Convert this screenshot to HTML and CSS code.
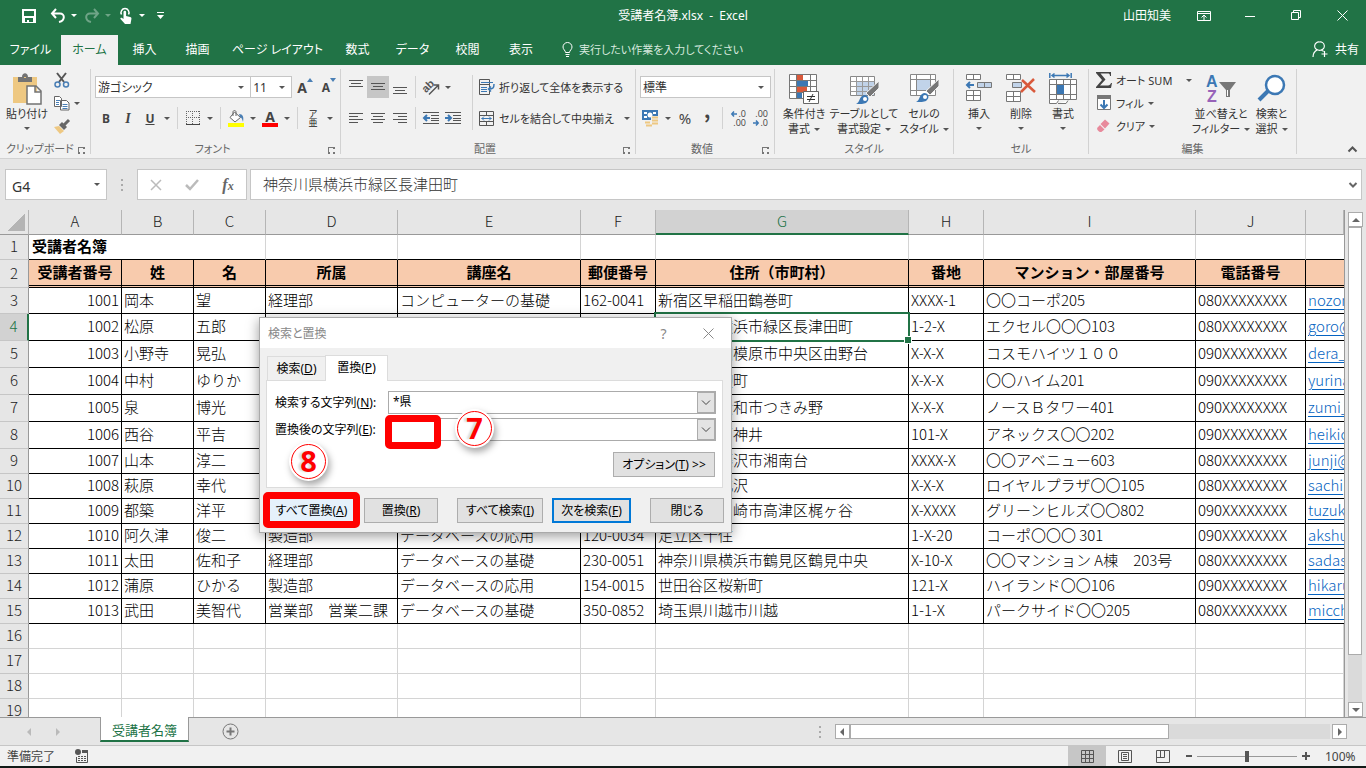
FILE: index.html
```html
<!DOCTYPE html>
<html lang="ja">
<head>
  <meta charset="UTF-8">
  <title>受講者名簿.xlsx - Excel</title>
  <link rel="stylesheet" href="styles.css">
</head>
<body>

  <header class="titlebar">
    <div class="quick">
      <button class="q-btn" aria-label="上書き保存"><svg width="16" height="16" viewBox="0 0 16 16"><path fill="#fff" fill-rule="evenodd" d="M1 1h14v14H1zM3 3v5h10V3zM4 10v4h2v-2h2v2h4v-4z"/></svg></button>
      <button class="q-btn" aria-label="元に戻す"><svg width="16" height="16" viewBox="0 0 16 16"><path fill="none" stroke="#fff" stroke-width="2" d="M6 1L2 5.500l4 4.500M2.500 5.500H10c5 0 5.500 7-1 8.500"/></svg></button>
      <span class="caret"></span>
      <button class="q-btn dim" aria-label="やり直し"><svg width="16" height="16" viewBox="0 0 16 16"><path fill="none" stroke="#fff" stroke-width="2" d="M10 1l4 4.500-4 4.500M13.500 5.500H6c-5 0-5.500 7 1 8.500"/></svg></button>
      <span class="caret dim"></span>
      <button class="q-btn" aria-label="タッチ/マウス モード"><svg width="14" height="18" viewBox="0 0 14 18"><path fill="none" stroke="#fff" stroke-width="1.500" d="M2.500 7.500a4 4 0 1 1 7 0"/><path fill="#fff" d="M4.500 5a1.300 1.300 0 0 1 2.600 0v4l4 1c1.200.300 1.500 1 1.300 2L11.500 17H6L1.500 12c-.5-1 .8-1.700 1.600-1L4.500 12z"/></svg></button>
      <span class="caret"></span>
      <button class="q-btn" aria-label="クイック アクセス ツール バーのカスタマイズ"><svg width="9" height="8" viewBox="0 0 9 8"><path fill="#fff" d="M1 0h7v1H1zM1 3h7L4.500 7z"/></svg></button>
    </div>
    <div class="title">受講者名簿.xlsx&nbsp; -&nbsp; Excel</div>
    <div class="window-tools">
      <span class="user">山田知美</span>
      <button aria-label="リボンの表示オプション"><svg width="14" height="12" viewBox="0 0 14 12"><path fill="none" stroke="#fff" d="M.5 1.500h13v9H.5zM.5 3.500h13M7 10V5M4.500 7.500L7 5l2.500 2.500"/></svg></button>
      <button aria-label="最小化"><svg width="10" height="10" viewBox="0 0 10 10"><path stroke="#fff" d="M0 5.500h10"/></svg></button>
      <button aria-label="元に戻す(縮小)"><svg width="11" height="11" viewBox="0 0 11 11"><path fill="none" stroke="#fff" d="M.5 2.500h7v7h-7zM2.500 2.500v-2h7v7h-2"/></svg></button>
      <button aria-label="閉じる"><svg width="11" height="11" viewBox="0 0 11 11"><path stroke="#fff" d="M.5.500l10 10M10.500.500l-10 10"/></svg></button>
    </div>
  </header>

  <nav class="tabs">
    <a href="#">ファイル</a>
    <a href="#" class="active">ホーム</a>
    <a href="#">挿入</a>
    <a href="#">描画</a>
    <a href="#">ページ レイアウト</a>
    <a href="#">数式</a>
    <a href="#">データ</a>
    <a href="#">校閲</a>
    <a href="#">表示</a>
    <a href="#" class="tellme"><svg width="11" height="15" viewBox="0 0 11 15"><path fill="none" stroke="#fff" d="M3.500 10.500c0-2-2.500-3-2.500-5.500a4.500 4.500 0 0 1 9 0c0 2.500-2.500 3.500-2.500 5.500zM3.500 12.500h4M4 14.500h3"/></svg>実行したい作業を入力してください</a>
    <a href="#" class="share"><svg width="16" height="17" viewBox="0 0 16 17"><path fill="none" stroke="#fff" stroke-width="1.200" d="M7.500 1a4 4 0 0 1 1.500 8c-.5.300-2 .300-3 0a4 4 0 0 1 1.500-8zM1 16c0-4 2-6 4.500-7.200M9.500 9c1 .500 1.500.800 2 1.500M12.500 10v6M9.500 13h6"/></svg>共有</a>
  </nav>

  <section class="ribbon">
    <div class="group g-clip">
      <div class="body">
        <button class="big"><svg width="30" height="32" viewBox="0 0 30 32"><path fill="#eec882" d="M1 4h24v26H1z"/><path fill="#737373" fill-rule="evenodd" d="M6 4h4c0-5 6-5 6 0h4v5H6zm6 0v1h2V4z"/><path fill="#fff" stroke="#737373" stroke-width="1.500" d="M15 13h9l5 5v13H15zM23 13v6h6"/></svg><span>貼り付け</span><span class="caret"></span></button>
        <div class="stack">
          <button aria-label="切り取り"><svg width="16" height="16" viewBox="0 0 16 16"><path stroke="#555" stroke-width="2" d="M3 1l7 9M12 1L5 10"/><circle cx="3.500" cy="12.500" r="2.500" fill="none" stroke="#4a7fb5" stroke-width="1.500"/><circle cx="12" cy="12.500" r="2.500" fill="none" stroke="#4a7fb5" stroke-width="1.500"/></svg></button>
          <button aria-label="コピー"><svg width="16" height="15" viewBox="0 0 16 15"><path fill="#fff" stroke="#666" d="M.5.500h5l2 2v8h-7zM6.500 4.500h6l2.500 2.500v7H6.500z"/><path stroke="#4a7fb5" d="M2 4.500h4M2 6.500h3M2 8.500h3M8.500 8.500h5M8.500 10.500h5M8.500 12.500h5"/></svg><span class="caret"></span></button>
          <button aria-label="書式のコピー/貼り付け"><svg width="16" height="15" viewBox="0 0 16 15"><path fill="#eec882" d="M0 8l5-1 5 5-4 3z"/><path fill="#666" d="M5 6l3-3 5 5-3 3z"/><path stroke="#666" stroke-width="3" d="M10 6l5-5"/></svg></button>
        </div>
      </div>
      <div class="caption">クリップボード<i class="launch"></i></div>
    </div>

    <div class="group g-font">
      <div class="body rows">
        <div class="row">
          <label class="combo font-name"><select aria-label="フォント"><option>游ゴシック</option></select><span class="caret"></span></label>
          <label class="combo font-size"><select aria-label="フォント サイズ"><option>11</option></select><span class="caret"></span></label>
          <button class="tool grow" aria-label="フォント サイズの拡大"><b>A</b><svg width="6" height="12" viewBox="0 0 6 12"><path fill="#4a7fb5" d="M0 6l3-4 3 4z"/></svg></button>
          <button class="tool shrink" aria-label="フォント サイズの縮小"><b>A</b><svg width="6" height="12" viewBox="0 0 6 12"><path fill="#4a7fb5" d="M0 2h6L3 6z"/></svg></button>
        </div>
        <div class="row">
          <button class="tool letter"><b>B</b></button>
          <button class="tool letter italic"><b>I</b></button>
          <button class="tool letter"><u>U</u></button><span class="caret"></span>
          <span class="sep"></span>
          <button class="tool" aria-label="罫線"><svg width="14" height="14" viewBox="0 0 14 14"><path stroke="#666" stroke-dasharray="1 1" d="M0 .5h14M0 6.500h14M.5 0v13M6.500 0v13M13.500 0v13"/><path stroke="#444" d="M0 13.500h14"/></svg></button><span class="caret"></span>
          <span class="sep"></span>
          <button class="tool" aria-label="塗りつぶしの色"><svg width="16" height="17" viewBox="0 0 16 17"><path fill="#fff" stroke="#666" d="M6.500 2l6 5.500-5.500 4.500L2 7.500zM5 6V2c0-2 3-2 3 0v4"/><path fill="#4a7fb5" d="M11 4c4 0 5 3 4 8-1-3-1-4-3-5z"/><path fill="#ff0" d="M0 13h16v4H0z"/></svg></button><span class="caret"></span>
          <button class="tool fontcolor" aria-label="フォントの色"><b>A</b></button><span class="caret"></span>
          <span class="sep"></span>
          <button class="tool ruby" aria-label="ふりがなの表示/非表示"><span>ア</span><span>亜</span></button><span class="caret"></span>
        </div>
      </div>
      <div class="caption">フォント<i class="launch"></i></div>
    </div>

    <div class="group g-align">
      <div class="body split">
        <div class="rows">
          <div class="row">
            <button class="tool" aria-label="上揃え"><svg width="14" height="16" viewBox="0 0 14 16"><path stroke="#555" d="M0 1.500h14M2 4.500h10M0 7.500h14"/></svg></button>
            <button class="tool pressed" aria-label="上下中央揃え"><svg width="14" height="16" viewBox="0 0 14 16"><path stroke="#555" d="M0 4.500h14M2 7.500h10M0 10.500h14"/></svg></button>
            <button class="tool" aria-label="下揃え"><svg width="14" height="16" viewBox="0 0 14 16"><path stroke="#555" d="M0 8.500h14M2 11.500h10M0 14.500h14"/></svg></button>
            <span class="sep"></span>
            <button class="tool" aria-label="方向"><svg width="18" height="16" viewBox="0 0 18 16"><text x="0" y="11" transform="rotate(-45 6 8)" font-family="Liberation Sans" font-size="11" font-weight="bold" fill="#555">ab</text><path fill="none" stroke="#555" stroke-width="1.500" d="M7 15.500L16 6.500M12 6H16.500V10.500"/></svg></button><span class="caret"></span>
          </div>
          <div class="row">
            <button class="tool" aria-label="左揃え"><svg width="14" height="14" viewBox="0 0 14 14"><path stroke="#555" d="M0 2.500h14M0 5.500h9M0 8.500h14M0 11.500h9"/></svg></button>
            <button class="tool" aria-label="中央揃え"><svg width="14" height="14" viewBox="0 0 14 14"><path stroke="#555" d="M0 2.500h14M2 5.500h10M0 8.500h14M2 11.500h10"/></svg></button>
            <button class="tool" aria-label="右揃え"><svg width="14" height="14" viewBox="0 0 14 14"><path stroke="#555" d="M0 2.500h14M5 5.500h9M0 8.500h14M5 11.500h9"/></svg></button>
            <span class="sep"></span>
            <button class="tool" aria-label="インデントを減らす"><svg width="16" height="14" viewBox="0 0 16 14"><path stroke="#555" d="M0 1.500h16M8 4.500h8M8 7.500h8M8 9.500h8M0 12.500h16"/><path fill="none" stroke="#3c78b4" stroke-width="2" d="M7 7H1M4 4L1 7l3 3"/></svg></button>
            <button class="tool" aria-label="インデントを増やす"><svg width="16" height="14" viewBox="0 0 16 14"><path stroke="#555" d="M0 1.500h16M8 4.500h8M8 7.500h8M8 9.500h8M0 12.500h16"/><path fill="none" stroke="#3c78b4" stroke-width="2" d="M0 7h6M3 4l3 3-3 3"/></svg></button>
          </div>
        </div>
        <span class="sep tall"></span>
        <div class="rows">
          <div class="row">
            <button class="wide"><svg width="16" height="16" viewBox="0 0 16 16"><path fill="none" stroke="#555" d="M.5.500h10v15H.5zM.5 5.500h10"/><path stroke="#3c78b4" d="M2 3.500h12M2 8.500h6M2 10.500h6M2 12.500h6"/><path fill="none" stroke="#3c78b4" stroke-width="1.500" d="M15 5c0 4-1 5-5 5M12 7.500L9.500 10l2.500 2.500"/></svg>折り返して全体を表示する</button>
          </div>
          <div class="row">
            <button class="wide"><svg width="16" height="15" viewBox="0 0 16 15"><path fill="none" stroke="#555" d="M.5.500h14v14H.5zM.5 4.500h14M.5 10.500h14M7.500.500v4M7.500 10.500v4"/><path fill="none" stroke="#3c78b4" d="M2.500 7.500h10M5 5.500l-2 2 2 2M10 5.500l2 2-2 2"/></svg>セルを結合して中央揃え</button><span class="caret push"></span>
          </div>
        </div>
      </div>
      <div class="caption">配置<i class="launch"></i></div>
    </div>

    <div class="group g-number">
      <div class="body rows">
        <div class="row">
          <label class="combo number-format"><select aria-label="表示形式"><option>標準</option></select><span class="caret"></span></label>
        </div>
        <div class="row">
          <button class="tool" aria-label="通貨表示形式"><svg width="18" height="17" viewBox="0 0 18 17"><path fill="#3c78b4" d="M0 0h16v10H0z"/><path fill="#fff" d="M2 2h3v2H2zM11 2h3v2h-3zM2 6h3v2H2z"/><circle cx="8" cy="5" r="2.500" fill="#fff"/><path fill="#f1f1f1" d="M9 6h9v11H9z"/><path stroke="#eec882" stroke-width="2" d="M10 7.500h6M10 10.500h6M10 13.500h6M3 12.500h5M4 15.500h6"/></svg></button><span class="caret"></span>
          <button class="tool percent">%</button>
          <button class="tool comma"><b>’</b></button>
          <span class="sep"></span>
          <button class="tool decimals" aria-label="小数点以下の表示桁数を増やす"><span><svg width="6" height="6" viewBox="0 0 6 6"><path fill="none" stroke="#3c78b4" stroke-width="1.500" d="M6 3H1M3 .5L.800 3 3 5.500"/></svg>.0</span><span>.00</span></button>
          <button class="tool decimals" aria-label="小数点以下の表示桁数を減らす"><span>.00</span><span><svg width="6" height="6" viewBox="0 0 6 6"><path fill="none" stroke="#3c78b4" stroke-width="1.500" d="M0 3h5M3 .5L5.200 3 3 5.500"/></svg>.0</span></button>
        </div>
      </div>
      <div class="caption">数値<i class="launch"></i></div>
    </div>

    <div class="group g-style">
      <div class="body">
        <button class="big"><svg width="32" height="32" viewBox="0 0 32 32"><path fill="#fff" stroke="#777" d="M1.500 1.500h27v24h-27zM1.500 7.500h27M1.500 13.500h27M1.500 19.500h27M8.500 1.500v24M22.500 1.500v24"/><path fill="#d9593b" d="M9 2h6v5H9zM9 14h10v5H9z"/><path fill="#3c78b4" d="M9 8h11v5H9zM9 20h5v5H9z"/><path fill="#fff" stroke="#666" d="M15.500 18.500h15v12h-15z"/><path stroke="#333" d="M19 23.500h8M19 26.500h8M25 21l-4 8"/></svg><span>条件付き</span><span>書式<span class="caret"></span></span></button>
        <button class="big center"><svg width="32" height="32" viewBox="0 0 32 32"><path fill="#fff" stroke="#888" d="M2.500 3.500h24v19h-24z"/><path fill="#c1d3e9" d="M9 9h17v13H9z"/><path stroke="#999" d="M2.500 8.500h24M2.500 13.500h24M2.500 18.500h24M8.500 3.500v19M14.500 3.500v19M20.500 3.500v19"/><path fill="#777" stroke="#f1f1f1" d="M31 8v7l-9 9-4-4z"/><path fill="#3c78b4" d="M8 31c4-1 3-8 8-9 5 0 6 5 2 8-2 1-6 1-10 1z"/><circle cx="17" cy="26" r="2" fill="#fff"/></svg><span>テーブルとして</span><span>書式設定<span class="caret"></span></span></button>
        <button class="big"><svg width="32" height="32" viewBox="0 0 32 32"><path fill="#fff" stroke="#888" d="M2.500 1.500h25v21h-25zM2.500 6.500h25M2.500 17.500h25M8.500 1.500v21M22.500 1.500v21"/><path fill="#c1d3e9" d="M9 7h13v10H9z"/><path fill="#777" stroke="#f1f1f1" d="M31 6v7l-9 9-4-4z"/><path fill="#3c78b4" d="M8 29c4-1 3-8 8-9 5 0 6 5 2 8-2 1-6 1-10 1z"/><circle cx="17" cy="24" r="2" fill="#fff"/></svg><span>セルの</span><span>スタイル<span class="caret"></span></span></button>
      </div>
      <div class="caption">スタイル</div>
    </div>

    <div class="group g-cells">
      <div class="body">
        <button class="big"><svg width="28" height="32" viewBox="0 0 28 32"><path fill="#fff" stroke="#777" d="M1.500 1.500h14v5h-14zM8.500 1.500v5M1.500 17.500h14v10h-14zM1.500 22.500h14M8.500 17.500v10"/><path fill="#c1d3e9" stroke="#777" d="M12.500 9.500h14v5h-14zM19.500 9.500v5"/><path fill="none" stroke="#3c78b4" stroke-width="2" d="M9 12H2M5 9l-3 3 3 3"/></svg><span>挿入</span><span class="caret"></span></button>
        <button class="big"><svg width="30" height="32" viewBox="0 0 30 32"><path fill="#fff" stroke="#777" d="M.5 1.500h14v5H.5zM7.500 1.500v5M.5 18.500h14v10H.5zM.5 23.500h14M7.500 18.500v10"/><path fill="#c1d3e9" stroke="#777" d="M6.500 9.500h9v5h-9z"/><path stroke="#d9593b" stroke-width="2.500" d="M16 7l13 12M28 6L15 19"/></svg><span>削除</span><span class="caret"></span></button>
        <button class="big"><svg width="28" height="32" viewBox="0 0 28 32"><path fill="#fff" stroke="#777" d="M.5 6.500h27v20H.5zM.5 11.500h27M.5 21.500h27M7.500 6.500v20M14.500 6.500v20M21.500 6.500v20M.5 26.500v4h7l2-3M9 30.500h8l2-3"/><path fill="#3c78b4" d="M8 12h7v9H8z"/><path fill="none" stroke="#3c78b4" stroke-width="1.500" d="M.8 0v5M22.200 0v5M3 2.500h17M5.500.500l-2.500 2 2.500 2M17.500.500l2.500 2-2.500 2"/></svg><span>書式</span><span class="caret"></span></button>
      </div>
      <div class="caption">セル</div>
    </div>

    <div class="group g-edit">
      <div class="body">
        <div class="stack">
          <button><svg width="16" height="16" viewBox="0 0 16 16"><path fill="#444" d="M0 0h15v4h-1c0-2-1-2.500-2-2.500H4.500L9.500 7.500l-5.500 6h8c1.500 0 2.500-1 3-2.500h1l-1 5H0v-1l6-7L0 1z"/></svg>オート SUM<span class="caret push"></span></button>
          <button><svg width="16" height="16" viewBox="0 0 16 16"><path fill="#fff" stroke="#777" d="M1.500 1.500h13v13h-13z"/><path fill="#777" d="M1 0h14v4H1z"/><path fill="none" stroke="#3c78b4" stroke-width="2" d="M8 5v8M4.500 9.500L8 13l3.500-3.500"/></svg>フィル<span class="caret"></span></button>
          <button><svg width="16" height="16" viewBox="0 0 16 16"><path fill="#e8899b" d="M9 1.500l4.500 4-4.500 5-4.500-4.500zM4 7l4.500 4.500-2.500 2c-1 1-2 .500-3 0L1.500 12c-.5-1-.5-2 0-2.500z"/></svg>クリア<span class="caret"></span></button>
        </div>
        <button class="big"><svg width="32" height="32" viewBox="0 0 32 32"><text x="1" y="14" font-family="Liberation Sans" font-size="16" font-weight="bold" fill="#3c78b4">A</text><text x="2" y="29" font-family="Liberation Sans" font-size="16" font-weight="bold" fill="#9762b8">Z</text><path fill="#777" d="M14 9h17l-6 8v7h-4v-7z"/><path fill="#fff" d="M22 17h1v6h-1z"/></svg><span>並べ替えと</span><span>フィルター<span class="caret"></span></span></button>
        <button class="big find"><svg width="32" height="32" viewBox="0 0 32 32"><circle cx="19" cy="12" r="9" fill="#fff" stroke="#3c78b4" stroke-width="2.500"/><path stroke="#3c78b4" stroke-width="4" d="M12 18L3 27"/></svg><span>検索と</span><span>選択<span class="caret"></span></span></button>
      </div>
      <div class="caption">編集</div>
    </div>
    <button class="collapse" aria-label="リボンを折りたたむ"><svg width="9" height="7" viewBox="0 0 9 7"><path fill="none" stroke="#555" stroke-width="2" d="M.5 5.500l4-4 4 4"/></svg></button>
  </section>

  <section class="formula">
    <label class="namebox"><input type="text" value="G4" aria-label="名前ボックス"><span class="caret"></span></label>
    <span class="dots"></span>
    <div class="fx">
      <button aria-label="キャンセル"><svg width="12" height="12" viewBox="0 0 12 12"><path stroke="#bbb" stroke-width="1.500" d="M1 1l10 10M11 1L1 11"/></svg></button>
      <button aria-label="入力"><svg width="14" height="12" viewBox="0 0 14 12"><path fill="none" stroke="#bbb" stroke-width="2.500" d="M1 6l4 4 8-9"/></svg></button>
      <button class="fn" aria-label="関数の挿入"><i>f</i><i class="x">x</i></button>
    </div>
    <label class="fbar"><input type="text" value="神奈川県横浜市緑区長津田町" aria-label="数式バー"><svg width="8" height="6" viewBox="0 0 8 6"><path fill="none" stroke="#666" stroke-width="2" d="M.5 1L4 4.500 7.500 1"/></svg></label>
  </section>

  <main class="work">
    <div class="sheet">
      <table class="grid">
        <colgroup>
          <col class="c-no"><col class="c-a"><col class="c-b"><col class="c-c"><col class="c-d"><col class="c-e"><col class="c-f"><col class="c-g"><col class="c-h"><col class="c-i"><col class="c-j"><col class="c-k">
        </colgroup>
        <thead>
          <tr><th class="corner"></th><th>A</th><th>B</th><th>C</th><th>D</th><th>E</th><th>F</th><th class="on">G</th><th>H</th><th>I</th><th>J</th><th></th></tr>
        </thead>
        <tbody class="list">
          <tr class="name"><th>1</th><td colspan="3">受講者名簿</td><td></td><td></td><td></td><td></td><td></td><td></td><td></td><td></td></tr>
          <tr class="fields"><th>2</th><td>受講者番号</td><td>姓</td><td>名</td><td>所属</td><td>講座名</td><td>郵便番号</td><td>住所（市町村）</td><td>番地</td><td>マンション・部屋番号</td><td>電話番号</td><td></td></tr>
          <tr class="first"><th>3</th><td>1001</td><td>岡本</td><td>望</td><td>経理部</td><td>コンピューターの基礎</td><td>162-0041</td><td>新宿区早稲田鶴巻町</td><td>XXXX-1</td><td>〇〇コーポ205</td><td>080XXXXXXXX</td><td><a href="#">nozomi</a></td></tr>
          <tr class="tall on"><th>4</th><td>1002</td><td>松原</td><td>五郎</td><td></td><td></td><td></td><td class="selected">神奈川県横浜市緑区長津田町<span class="handle"></span></td><td>1-2-X</td><td>エクセル〇〇〇103</td><td>080XXXXXXXX</td><td><a href="#">goro@</a></td></tr>
          <tr class="tall"><th>5</th><td>1003</td><td>小野寺</td><td>晃弘</td><td></td><td></td><td></td><td>神奈川県相模原市中央区由野台</td><td>X-X-X</td><td>コスモハイツ１００</td><td>090XXXXXXXX</td><td><a href="#">dera_</a></td></tr>
          <tr class="tall"><th>6</th><td>1004</td><td>中村</td><td>ゆりか</td><td></td><td></td><td></td><td>千代田区麹町</td><td>X-X-X</td><td>〇〇ハイム201</td><td>090XXXXXXXX</td><td><a href="#">yurina</a></td></tr>
          <tr class="tall"><th>7</th><td>1005</td><td>泉</td><td>博光</td><td></td><td></td><td></td><td>神奈川県大和市つきみ野</td><td>X-X-X</td><td>ノースＢタワー401</td><td>090XXXXXXXX</td><td><a href="#">zumi_</a></td></tr>
          <tr class="tall"><th>8</th><td>1006</td><td>西谷</td><td>平吉</td><td></td><td></td><td></td><td>練馬区上石神井</td><td>101-X</td><td>アネックス〇〇202</td><td>090XXXXXXXX</td><td><a href="#">heikic</a></td></tr>
          <tr><th>9</th><td>1007</td><td>山本</td><td>淳二</td><td></td><td></td><td></td><td>神奈川県藤沢市湘南台</td><td>XXXX-X</td><td>〇〇アベニュー603</td><td>080XXXXXXXX</td><td><a href="#">junji@</a></td></tr>
          <tr><th>10</th><td>1008</td><td>萩原</td><td>幸代</td><td></td><td></td><td></td><td>世田谷区北沢</td><td>X-X-X</td><td>ロイヤルプラザ〇〇105</td><td>080XXXXXXXX</td><td><a href="#">sachi</a></td></tr>
          <tr><th>11</th><td>1009</td><td>都築</td><td>洋平</td><td></td><td></td><td></td><td>神奈川県川崎市高津区梶ヶ谷</td><td>X-XXXX</td><td>グリーンヒルズ〇〇802</td><td>090XXXXXXXX</td><td><a href="#">tuzuki</a></td></tr>
          <tr><th>12</th><td>1010</td><td>阿久津</td><td>俊二</td><td>製造部</td><td>データベースの応用</td><td>120-0034</td><td>足立区千住</td><td>1-X-20</td><td>コーポ〇〇〇 301</td><td>090XXXXXXXX</td><td><a href="#">akshu</a></td></tr>
          <tr><th>13</th><td>1011</td><td>太田</td><td>佐和子</td><td>経理部</td><td>データベースの基礎</td><td>230-0051</td><td>神奈川県横浜市鶴見区鶴見中央</td><td>X-10-X</td><td>〇〇マンション A棟　203号</td><td>080XXXXXXXX</td><td><a href="#">sadas</a></td></tr>
          <tr><th>14</th><td>1012</td><td>蒲原</td><td>ひかる</td><td>製造部</td><td>データベースの応用</td><td>154-0015</td><td>世田谷区桜新町</td><td>121-X</td><td>ハイランド〇〇106</td><td>090XXXXXXXX</td><td><a href="#">hikaru</a></td></tr>
          <tr><th>15</th><td>1013</td><td>武田</td><td>美智代</td><td>営業部　営業二課</td><td>データベースの基礎</td><td>350-0852</td><td>埼玉県川越市川越</td><td>1-1-X</td><td>パークサイド〇〇205</td><td>080XXXXXXXX</td><td><a href="#">micch</a></td></tr>
        </tbody>
        <tbody class="blank">
          <tr><th>16</th><td></td><td></td><td></td><td></td><td></td><td></td><td></td><td></td><td></td><td></td><td></td></tr>
          <tr><th>17</th><td></td><td></td><td></td><td></td><td></td><td></td><td></td><td></td><td></td><td></td><td></td></tr>
          <tr><th>18</th><td></td><td></td><td></td><td></td><td></td><td></td><td></td><td></td><td></td><td></td><td></td></tr>
          <tr><th>19</th><td></td><td></td><td></td><td></td><td></td><td></td><td></td><td></td><td></td><td></td><td></td></tr>
        </tbody>
      </table>
    </div>
    <div class="vscroll">
      <button class="arrow" aria-label="上へ"><span class="tri up"></span></button>
      <div class="track"><div class="thumb"></div></div>
      <button class="arrow" aria-label="下へ"><span class="tri down"></span></button>
    </div>
  </main>

  <footer class="sheetbar">
    <span class="tri left"></span>
    <span class="tri right"></span>
    <a href="#" class="sheet-tab">受講者名簿</a>
    <button class="add" aria-label="新しいシート"><svg width="17" height="17" viewBox="0 0 17 17"><circle cx="8.500" cy="8.500" r="7.500" fill="none" stroke="#777"/><path stroke="#777" stroke-width="2" d="M8.500 4.500v8M4.500 8.500h8"/></svg></button>
    <span class="dots"></span>
    <div class="hscroll">
      <button class="arrow" aria-label="左へ"><span class="tri left"></span></button>
      <div class="track"><div class="thumb"></div></div>
      <button class="arrow" aria-label="右へ"><span class="tri right"></span></button>
    </div>
  </footer>

  <footer class="status">
    <span class="ready">準備完了</span>
    <svg class="macro" width="14" height="14" viewBox="0 0 14 14"><circle cx="3" cy="3" r="3" fill="#555"/><path fill="none" stroke="#555" d="M1.500 8v5.500h11v-12H7"/><path fill="#555" d="M7 1h6v3H7z"/><path stroke="#555" stroke-dasharray="2 1" d="M3 7.500h9M3 9.500h9M3 11.500h9"/></svg>
    <div class="views">
      <button class="view pressed" aria-label="標準"><svg width="13" height="13" viewBox="0 0 13 13"><path fill="none" stroke="#555" d="M.5.500h12v12H.5zM.5 4.500h12M.5 8.500h12M4.500.500v12M8.500.500v12"/></svg></button>
      <button class="view" aria-label="ページ レイアウト"><svg width="14" height="13" viewBox="0 0 14 13"><path fill="none" stroke="#555" d="M.5.500h13v12H.5zM3.500 2.500h7v8h-7zM5 4.500h4M5 6.500h4M5 8.500h4"/></svg></button>
      <button class="view" aria-label="改ページ プレビュー"><svg width="14" height="13" viewBox="0 0 14 13"><path fill="none" stroke="#555" d="M.5.500h13v12H.5zM.5 7.500h8M4.500.500v7M8.500.500v7"/></svg></button>
    </div>
    <div class="zoom">
      <button class="minus" aria-label="縮小"></button>
      <input type="range" min="0" max="100" value="50" aria-label="ズーム">
      <button class="plus" aria-label="拡大"><svg width="8" height="8" viewBox="0 0 8 8"><path stroke="#555" stroke-width="2" d="M4 0v8M0 4h8"/></svg></button>
      <span class="percent">100%</span>
    </div>
  </footer>

  <div class="dialog" role="dialog" aria-label="検索と置換">
    <div class="dialog-title">
      <span>検索と置換</span>
      <button class="help">?</button>
      <button aria-label="閉じる"><svg width="11" height="11" viewBox="0 0 11 11"><path stroke="#888" d="M.5.500l10 10M10.500.500l-10 10"/></svg></button>
    </div>
    <div class="dialog-tabs">
      <button class="find-tab">検索(<u>D</u>)</button>
      <button class="replace-tab">置換(<u>P</u>)</button>
    </div>
    <div class="panel">
      <div class="field">
        <label for="find">検索する文字列(<u>N</u>):</label>
        <div class="box"><input id="find" type="text" value="*県"><button aria-label="履歴"><svg width="10" height="6" viewBox="0 0 10 6"><path fill="none" stroke="#444" d="M1 .5l4 4 4-4"/></svg></button></div>
      </div>
      <div class="field">
        <label for="replace">置換後の文字列(<u>E</u>):</label>
        <div class="box"><input id="replace" type="text"><button aria-label="履歴"><svg width="10" height="6" viewBox="0 0 10 6"><path fill="none" stroke="#444" d="M1 .5l4 4 4-4"/></svg></button></div>
      </div>
      <button class="push options">オプション(<u>T</u>) &gt;&gt;</button>
    </div>
    <div class="actions">
      <button class="push hot all">すべて置換(<u>A</u>)</button>
      <button class="push replace">置換(<u>R</u>)</button>
      <button class="push find-all">すべて検索(<u>I</u>)</button>
      <button class="push default">次を検索(<u>F</u>)</button>
      <button class="push close">閉じる</button>
    </div>
    <div class="mark mark-field"></div>
    <div class="mark mark-button"></div>
    <div class="step step-seven">7</div>
    <div class="step step-eight">8</div>
  </div>

</body>
</html>
```
FILE: styles.css
```css
* {
  box-sizing: border-box;
}
body {
  margin: 0;
  height: 100vh;
  display: flex;
  flex-direction: column;
  overflow: hidden;
  background: #e6e6e6;
  border-bottom: 2px solid #111a17;
  font-family: "Noto Sans", "Noto Sans CJK JP", sans-serif;
  font-size: 12px;
  line-height: 15px;
  font-feature-settings: "palt";
  color: #333;
}
button, input, select {
  font: inherit;
  font-feature-settings: inherit;
  color: inherit;
  background: none;
  border: none;
  padding: 0;
  margin: 0;
}
button {
  display: flex;
  align-items: center;
  justify-content: center;
  white-space: nowrap;
}
input {
  min-width: 0;
  outline: none;
}
a {
  color: inherit;
  text-decoration: none;
}
svg {
  display: block;
  flex-shrink: 0;
  overflow: visible;
}
.dim {
  opacity: 0.35;
}
.caret {
  display: inline-block;
  flex-shrink: 0;
  width: 5px;
  border: 3px solid transparent;
  border-top-color: #555;
  border-bottom: none;
}

/* title bar */
.titlebar {
  height: 35px;
  flex-shrink: 0;
  display: grid;
  grid-template-columns: 1fr auto 1fr;
  align-items: center;
  background: #217346;
  color: #fff;
  padding-bottom: 4px;
}
.title {
  white-space: pre;
}
.quick {
  display: flex;
  align-items: center;
  padding-left: 21px;
}
.quick .q-btn {
  width: 16px;
}
.quick .q-btn:nth-child(2) {
  margin-left: 13px;
}
.quick .caret {
  border-top-color: #fff;
  margin: 0 7px 0 5px;
}
.window-tools {
  display: flex;
  align-items: center;
  justify-content: flex-end;
  padding-right: 1px;
}
.window-tools button {
  width: 46px;
  height: 30px;
}
.user {
  margin-right: 10px;
}

/* ribbon tabs */
.tabs {
  height: 30px;
  flex-shrink: 0;
  display: grid;
  grid-template-columns: 61px 57px 53px 53px 107px 53px 57px 53px 54px 1fr auto;
  background: #217346;
  color: #fff;
}
.tabs a {
  display: flex;
  align-items: center;
  justify-content: center;
  padding-bottom: 2px;
  white-space: nowrap;
}
.tabs .active {
  background: #f1f1f1;
  color: #217346;
}
.tabs .tellme {
  justify-content: flex-start;
  gap: 6px;
  padding-left: 14px;
  font-size: 11px;
  color: #d7e9de;
}
.tabs .share {
  gap: 7px;
  padding-right: 7px;
}

/* ribbon */
.ribbon {
  display: flex;
  flex-shrink: 0;
  height: 94px;
  padding: 4px 0;
  background: #f1f1f1;
  border-bottom: 1px solid #d2d2d2;
  font-size: 11px;
}
.group {
  display: flex;
  flex-direction: column;
  flex-shrink: 0;
  border-right: 1px solid #d2d2d2;
}
.g-clip { width: 91px; }
.g-font { width: 250px; }
.g-align { width: 295px; }
.g-number { width: 139px; }
.g-style { width: 179px; }
.g-cells { width: 135px; }
.g-edit { width: 208px; }
.body {
  flex: 1;
  display: flex;
}
.caption {
  height: 10px;
  display: flex;
  align-items: center;
  justify-content: center;
  color: #666;
  line-height: 10px;
  white-space: nowrap;
}
.launch {
  width: 7px;
  height: 7px;
  margin: 3px 5px 0 auto;
  border: 1px solid #777;
  border-right: 2px dotted #777;
  border-bottom: 2px dotted #777;
}
.caption:has(.launch)::before {
  content: "";
  width: 6px;
  margin-right: auto;
}
.g-clip .caption::before {
  margin: 0;
}
.rows {
  display: flex;
  flex-direction: column;
  gap: 9px;
}
.body.rows, .split .rows {
  padding: 7px 0 0 4px;
}
.row {
  display: flex;
  align-items: center;
  height: 22px;
}
.tool {
  width: 22px;
  height: 22px;
  flex-shrink: 0;
  color: #444;
}
.tool + .caret {
  margin: 0 3px;
}
.pressed {
  background: #c6c6c6;
}
.sep {
  width: 1px;
  height: 22px;
  background: #d2d2d2;
  margin: 0 4px;
}
.sep.tall {
  flex-shrink: 0;
  height: 55px;
  margin: 6px 2px 0 8px;
}
.combo {
  display: grid;
  grid-template-columns: 1fr 12px;
  align-items: center;
  height: 22px;
  background: #fff;
  border: 1px solid #c6c6c6;
  font-size: 12px;
}
.combo select {
  grid-area: 1 / 1 / 2 / 3;
  appearance: none;
  height: 20px;
  padding-left: 2px;
  outline: none;
}
.combo .caret {
  grid-area: 1 / 2;
}
.font-name { width: 157px; }
.font-size { width: 41px; border-left: none; }
.number-format { width: 131px; }
.letter {
  font-size: 12px;
}
.italic {
  font-family: "Liberation Serif", serif;
  font-style: italic;
  font-size: 14px;
}
.letter u {
  font-weight: bold;
}
.grow, .shrink {
  font-size: 14px;
  margin-left: 2px;
}
.shrink {
  font-size: 12px;
}
.grow svg, .shrink svg {
  align-self: flex-start;
}
.fontcolor {
  flex-direction: column;
  font-size: 14px;
}
.fontcolor b {
  width: 16px;
  height: 17px;
  border-bottom: 4px solid #f00;
  line-height: 14px;
}
.ruby {
  flex-direction: column;
  font-size: 9px;
  line-height: 9px;
  color: #222;
}
.wide {
  gap: 4px;
}
.caret.push {
  margin-left: 10px;
}
.tool.percent {
  font-size: 15px;
}
.comma {
  font-family: "Noto Sans CJK JP", sans-serif;
  font-size: 22px;
  line-height: 30px;
  padding-top: 8px;
}
.decimals {
  flex-direction: column;
  align-items: flex-end;
  padding-right: 3px;
  font: 9px/9px "Open Sans", sans-serif;
}
.decimals span {
  display: flex;
  align-items: center;
  gap: 1px;
}
.big {
  flex-direction: column;
  justify-content: flex-start;
  width: 42px;
  padding-top: 4px;
}
.big svg {
  margin-bottom: 1px;
}
.big .caret {
  margin: 0 0 2px 4px;
}
.big > .caret {
  margin: 6px 0 0;
}
.g-clip .big {
  width: 54px;
}
.g-clip .stack {
  width: 30px;
}
.stack {
  display: flex;
  flex-direction: column;
  gap: 1px;
}
.stack button {
  height: 22px;
  justify-content: flex-start;
  gap: 4px;
}
.g-style .body {
  justify-content: center;
}
.g-style .big {
  width: 52px;
}
.g-style .big.center {
  width: 68px;
}
.g-cells .body {
  padding-left: 4px;
}
.g-edit .body {
  padding-left: 7px;
}
.g-edit .stack {
  width: 96px;
}
.g-edit .big {
  width: 58px;
}
.g-edit .big.find {
  width: 43px;
}
.collapse {
  margin: auto 9px 0 auto;
  padding-bottom: 1px;
}

/* formula bar */
.formula {
  display: flex;
  flex-shrink: 0;
  height: 51px;
  padding: 10px 4px 10px 5px;
}
.namebox, .fx, .fbar {
  display: flex;
  align-items: center;
  background: #fff;
  border: 1px solid #c6c6c6;
}
.namebox {
  width: 102px;
  padding: 4px 6px 0;
  font-size: 14px;
}
.namebox input {
  flex: 1;
}
.namebox .caret {
  margin-bottom: 4px;
}
.dots {
  width: 2px;
  height: 12px;
  margin: auto 14px;
  background: repeating-linear-gradient(#aaa 0 2px, transparent 2px 5px);
}
.fx {
  width: 110px;
  margin-right: 3px;
}
.fx button {
  flex: 1;
}
.fn {
  font-family: "Liberation Serif", serif;
  font-size: 16px;
  font-weight: bold;
  color: #666;
}
.fn .x {
  font-size: 12px;
  padding-top: 4px;
}
.fbar {
  flex: 1;
  padding: 0 4px 0 12px;
  font-family: "Noto Sans CJK JP", sans-serif;
  font-size: 15px;
}
.fbar input {
  flex: 1;
  padding-bottom: 3px;
  font-weight: 300;
  font-feature-settings: normal;
}

/* sheet */
.work {
  flex: 1;
  min-height: 0;
  display: flex;
}
.sheet {
  flex: 1;
  min-width: 0;
  overflow: hidden;
  border-right: 1px solid #999;
}
.grid {
  table-layout: fixed;
  width: 100%;
  min-width: 1344px;
  border-spacing: 0;
  background: #fff;
  font-family: "Noto Sans CJK JP", sans-serif;
  font-size: 15px;
  line-height: 20px;
  font-weight: 300;
  font-feature-settings: normal;
  color: #000;
}
.c-no { width: 29px; }
.c-a { width: 93px; }
.c-b, .c-c { width: 72px; }
.c-d { width: 132px; }
.c-e { width: 183px; }
.c-f { width: 75px; }
.c-g { width: 253px; }
.c-h { width: 75px; }
.c-i { width: 212px; }
.c-j { width: 110px; }
.grid th, .grid td {
  height: 25px;
  padding: 0 2px 2px;
  white-space: nowrap;
  overflow: hidden;
  border-right: 1px solid #d4d4d4;
  border-bottom: 1px solid #d4d4d4;
}
.grid td {
  text-align: left;
}
.grid th {
  background: #e6e6e6;
  font-weight: 300;
  color: #222;
  border-right-color: #999;
  border-bottom-color: #c6c6c6;
}
.grid thead th {
  border-right-color: #b5b5b5;
  border-bottom-color: #999;
}
.grid thead th.on {
  background: #d2d2d2;
  color: #217346;
  border-bottom: 2px solid #217346;
}
.grid .corner {
  background: linear-gradient(135deg, transparent 50%, #b4b4b4 50%) 8px 4px / 17px 17px no-repeat #e6e6e6;
}
.on > th:first-child {
  background: #d2d2d2;
  color: #217346;
  border-right: 2px solid #217346;
}
.list td {
  border-color: #000;
}
.grid .name td {
  font-weight: bold;
  padding-left: 3px;
  border-right-color: #d4d4d4;
}
.grid .fields th, .grid .fields td {
  height: 28px;
}
.grid .fields td {
  background: #f8cbad;
  font-weight: bold;
  text-align: center;
  border-bottom: 3px double #000;
}
.grid .first th, .grid .first td {
  height: 26px;
}
.grid .tall th, .grid .tall td {
  height: 27px;
}
.list tr:not(.fields):not(.name) td:nth-child(2) {
  text-align: right;
}
.grid .list td:last-child {
  border-right: none;
}
.list a {
  color: #0563c1;
  text-decoration: underline;
  text-underline-offset: 3px;
}
.grid .selected {
  position: relative;
  overflow: visible;
}
.selected::after {
  content: "";
  position: absolute;
  inset: -2px -2px -2px -2px;
  border: 2px solid #217346;
}
.handle {
  position: absolute;
  right: -3px;
  bottom: -3px;
  z-index: 1;
  width: 6px;
  height: 6px;
  background: #217346;
  outline: 1px solid #fff;
}

/* scroll bars */
.tri {
  border: 4px solid transparent;
}
.tri.up { border-bottom-color: #666; border-top: none; }
.tri.down { border-top-color: #666; border-bottom: none; }
.tri.left { border-right-color: #666; border-left: none; }
.tri.right { border-left-color: #666; border-right: none; }
.arrow {
  width: 15px;
  height: 15px;
  background: #fff;
  border: 1px solid #ababab;
}
.vscroll {
  width: 21px;
  display: flex;
  flex-direction: column;
  padding: 2px 4px 0 3px;
}
.track {
  flex: 1;
  background: #dadada;
}
.thumb {
  background: #fff;
  border: 1px solid #ababab;
}
.vscroll .thumb {
  height: 90%;
}
.sheetbar {
  display: flex;
  flex-shrink: 0;
  height: 28px;
  border-top: 1px solid #999;
}
.sheetbar > .tri {
  align-self: center;
  margin-left: 27px;
  opacity: 0.35;
}
.sheetbar > .tri + .tri {
  margin: 0 40px 0 25px;
}
.sheet-tab {
  width: 89px;
  height: 25px;
  margin-top: -1px;
  padding-top: 6px;
  text-align: center;
  background: #fff;
  color: #217346;
  font-size: 13px;
  border: 1px solid #999;
  border-top: none;
  border-bottom: 2px solid #217346;
}
.add {
  margin-left: 33px;
}
.sheetbar .dots {
  margin-right: 14px;
  margin-left: auto;
}
.hscroll {
  width: 37.5%;
  display: flex;
  align-items: center;
  margin-right: 19px;
}
.hscroll .track, .hscroll .thumb {
  height: 15px;
}
.hscroll .track {
  margin-right: 2px;
}
.hscroll .thumb {
  width: 66.5%;
}

/* status bar */
.status {
  display: flex;
  align-items: center;
  flex-shrink: 0;
  height: 21px;
  padding-left: 7px;
  background: #f1f1f1;
  border-top: 1px solid #c6c6c6;
  color: #444;
}
.macro {
  margin-left: 20px;
}
.views {
  display: flex;
  align-self: stretch;
  margin-left: auto;
}
.view {
  width: 38px;
}
.zoom {
  display: flex;
  align-items: center;
  gap: 5px;
  padding: 0 8px 0 4px;
}
.zoom .percent {
  width: 33px;
  margin-left: 10px;
}
.minus {
  width: 6px;
  height: 2px;
  background: #555;
}
.zoom input {
  appearance: none;
  width: 100px;
  height: 10px;
  background: linear-gradient(#999, #999) center / 100% 1px no-repeat;
}
.zoom input::-webkit-slider-thumb {
  appearance: none;
  width: 4px;
  height: 11px;
  background: #555;
}

/* find and replace window */
.dialog {
  position: absolute;
  left: 259px;
  top: 317px;
  width: 473px;
  background: #f0f0f0;
  border: 1px solid #aaa;
  box-shadow: 0 3px 12px rgba(0, 0, 0, 0.4);
  color: #000;
}
.dialog-title {
  display: flex;
  align-items: center;
  height: 30px;
  padding-left: 8px;
  background: #fff;
  color: #888;
}
.dialog-title span {
  margin-right: auto;
}
.dialog-title button {
  width: 45px;
}
.dialog-title .help {
  font-size: 14px;
}
.dialog-tabs {
  display: flex;
  align-items: flex-end;
  height: 32px;
  padding-left: 7px;
}
.dialog-tabs button {
  border: 1px solid #dcdcdc;
  border-bottom: none;
}
.dialog-tabs .find-tab {
  width: 58px;
  height: 24px;
  border-right: none;
}
.dialog-tabs .replace-tab {
  width: 63px;
  height: 26px;
  background: #fff;
  padding-bottom: 2px;
}
.panel {
  display: flex;
  flex-direction: column;
  gap: 4px;
  margin: 0 8px 0 6px;
  padding: 10px 6px 10px 8px;
  background: #fff;
  border: 1px solid #dcdcdc;
}
.replace-tab {
  position: relative;
  top: 1px;
}
.field {
  display: grid;
  grid-template-columns: 113px 1fr;
  align-items: center;
}
.field label {
  white-space: nowrap;
}
.box {
  display: flex;
  height: 23px;
  border: 1px solid #ababab;
  background: #fff;
}
.box input {
  flex: 1;
  padding: 0 0 3px 4px;
}
.box button {
  width: 18px;
  background: #e3e3e3;
  border: 1px solid #ababab;
}
.push:is(button) {
  height: 25px;
  background: #e1e1e1;
  border: 1px solid #adadad;
}
.options {
  align-self: flex-end;
  width: 102px;
  margin: 7px 1px 0 0;
}
.actions {
  display: flex;
  padding: 10px 7px 9px 6px;
}
.all { width: 91px; }
.replace { width: 74px; margin-left: 7px; }
.find-all { width: 86px; margin-left: 19px; }
.default { width: 79px; margin-left: 9px; }
.close { width: 74px; margin-left: auto; }
.push.hot {
  background: #e5f1fb;
}
.push.default {
  border: 2px solid #0078d7;
}

/* red call-outs */
.mark {
  position: absolute;
  border: 7px solid #f00;
  border-radius: 5px;
}
.mark-field {
  left: 125px;
  top: 97px;
  width: 56px;
  height: 34px;
  background: #fff;
}
.mark-button {
  left: 3px;
  top: 174px;
  width: 97px;
  height: 36px;
}
.step {
  position: absolute;
  width: 35px;
  height: 35px;
  border: 1px solid #f00;
  border-radius: 50%;
  background: #fff;
  box-shadow: 0 0 0 2px #fff, 2px 4px 7px 2px rgba(0, 0, 0, 0.35);
  color: #f00;
  font: bold 29px/32px "Open Sans", sans-serif;
  text-align: center;
  text-shadow: -3px 0 2px #ddd;
}
.step-seven {
  left: 197px;
  top: 93px;
}
.step-eight {
  left: 31px;
  top: 126px;
}
```
